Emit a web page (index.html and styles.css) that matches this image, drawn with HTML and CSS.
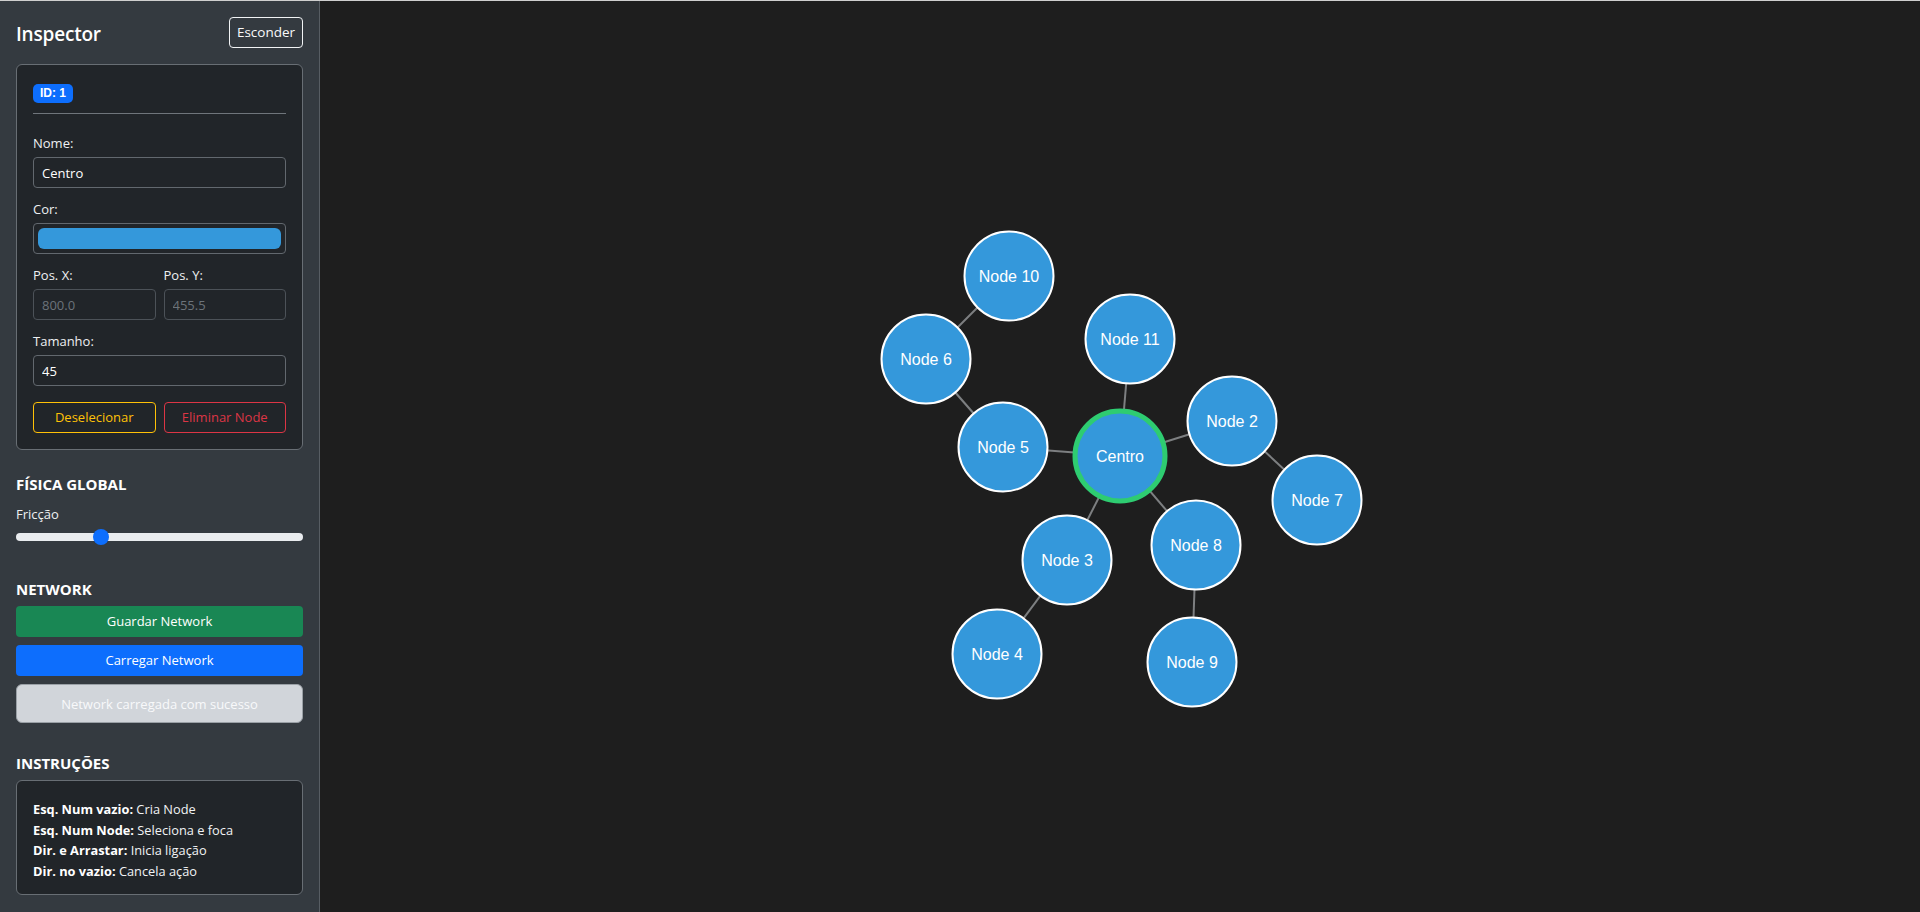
FILE: index.html
```html
<!DOCTYPE html>
<html lang="pt">
<head>
<meta charset="utf-8">
<title>Network Inspector</title>
<link rel="stylesheet" href="styles.css">
</head>
<body>
<div class="app">
  <aside class="sidebar">
    <div class="sb-header">
      <h5 class="title">Inspector</h5>
      <button class="btn btn-hide">Esconder</button>
    </div>

    <div class="card inspector">
      <div class="badge-row"><span class="badge">ID: 1</span></div>
      <hr class="divider">
      <div class="field">
        <label class="lbl">Nome:</label>
        <input class="input" type="text" value="Centro">
      </div>
      <div class="field">
        <label class="lbl">Cor:</label>
        <div class="color-input"><div class="swatch"></div></div>
      </div>
      <div class="field row2">
        <div class="col">
          <label class="lbl">Pos. X:</label>
          <input class="input input-ro" type="text" value="800.0" readonly>
        </div>
        <div class="col">
          <label class="lbl">Pos. Y:</label>
          <input class="input input-ro" type="text" value="455.5" readonly>
        </div>
      </div>
      <div class="field field-last">
        <label class="lbl">Tamanho:</label>
        <input class="input" type="text" value="45">
      </div>
      <div class="actions">
        <button class="btn btn-warn">Deselecionar</button>
        <button class="btn btn-danger">Eliminar Node</button>
      </div>
    </div>

    <h6 class="section-title sec-physics">FÍSICA GLOBAL</h6>
    <label class="lbl lbl-range">Fricção</label>
    <input class="range" type="range" min="0" max="1" step="0.001" value="0.284">

    <h6 class="section-title sec-network">NETWORK</h6>
    <div class="net-buttons">
      <button class="btn btn-block btn-green">Guardar Network</button>
      <button class="btn btn-block btn-blue">Carregar Network</button>
      <div class="status">Network carregada com sucesso</div>
    </div>

    <h6 class="section-title sec-instr">INSTRUÇÕES</h6>
    <div class="card instr">
      <div class="instr-line"><b>Esq. Num vazio:</b> Cria Node</div>
      <div class="instr-line"><b>Esq. Num Node:</b> Seleciona e foca</div>
      <div class="instr-line"><b>Dir. e Arrastar:</b> Inicia ligação</div>
      <div class="instr-line"><b>Dir. no vazio:</b> Cancela ação</div>
    </div>
  </aside>

  <main class="canvas">
    <svg class="graph" viewBox="320 1 1600 911" width="1600" height="911" xmlns="http://www.w3.org/2000/svg">
      <g class="edges">
        <line x1="1120" y1="456" x2="1130" y2="339"/>
        <line x1="1120" y1="456" x2="1003" y2="447"/>
        <line x1="1120" y1="456" x2="1232" y2="421"/>
        <line x1="1120" y1="456" x2="1067" y2="560"/>
        <line x1="1120" y1="456" x2="1196" y2="545"/>
        <line x1="1003" y1="447" x2="926" y2="359"/>
        <line x1="926" y1="359" x2="1009" y2="276"/>
        <line x1="1232" y1="421" x2="1317" y2="500"/>
        <line x1="1067" y1="560" x2="997" y2="654"/>
        <line x1="1196" y1="545" x2="1192" y2="662"/>
      </g>
      <g class="nodes">
        <g class="node"><circle cx="1009" cy="276" r="44.5"/><text x="1009" y="276">Node 10</text></g>
        <g class="node"><circle cx="926" cy="359" r="44.5"/><text x="926" y="359">Node 6</text></g>
        <g class="node"><circle cx="1130" cy="339" r="44.5"/><text x="1130" y="339">Node 11</text></g>
        <g class="node"><circle cx="1003" cy="447" r="44.5"/><text x="1003" y="447">Node 5</text></g>
        <g class="node"><circle cx="1232" cy="421" r="44.5"/><text x="1232" y="421">Node 2</text></g>
        <g class="node"><circle cx="1317" cy="500" r="44.5"/><text x="1317" y="500">Node 7</text></g>
        <g class="node"><circle cx="1067" cy="560" r="44.5"/><text x="1067" y="560">Node 3</text></g>
        <g class="node"><circle cx="1196" cy="545" r="44.5"/><text x="1196" y="545">Node 8</text></g>
        <g class="node"><circle cx="997" cy="654" r="44.5"/><text x="997" y="654">Node 4</text></g>
        <g class="node"><circle cx="1192" cy="662" r="44.5"/><text x="1192" y="662">Node 9</text></g>
        <g class="node node-selected"><circle cx="1120" cy="456" r="45"/><text x="1120" y="456">Centro</text></g>
      </g>
    </svg>
  </main>
</div>
</body>
</html>
```

FILE: styles.css
```css
* { box-sizing: border-box; }

html, body {
  margin: 0;
  padding: 0;
  height: 912px;
  overflow: hidden;
}

body {
  border-top: 1px solid #cfcfcf;
  background: #1e1e1e;
  font-family: "Open Sans", "Noto Sans", sans-serif;
  color: #f1f3f5;
}

.app {
  display: flex;
  height: 911px;
}

/* ---------- Sidebar ---------- */
.sidebar {
  width: 320px;
  flex: 0 0 320px;
  background: #343a40;
  border-right: 1px solid #575d63;
  padding: 16px 16px 0 16px;
  display: flex;
  flex-direction: column;
}

.sb-header {
  display: flex;
  justify-content: space-between;
  align-items: center;
  height: 31px;
  margin-bottom: 16px;
}

.title {
  margin: 0;
  font-size: 19px;
  font-weight: 600;
  line-height: 24px;
  color: #ffffff;
  padding-top: 3px;
  letter-spacing: -0.2px;
}

.btn {
  font-family: "Open Sans", "Noto Sans", sans-serif;
  font-size: 13px;
  line-height: 1;
  height: 31px;
  border-radius: 4px;
  background: transparent;
  cursor: pointer;
  padding: 0 8px;
}

.btn-hide {
  border: 1px solid #f1f3f5;
  color: #f8f9fa;
  width: 74px;
  padding: 0;
  font-size: 13.5px;
}

.card {
  background: #212529;
  border: 1px solid #686e74;
  border-radius: 6px;
}

.inspector {
  padding: 19px 16px 16px 16px;
}

.badge-row { display: flex; }

.badge {
  display: inline-block;
  height: 19px;
  line-height: 19px;
  padding: 0 7px;
  border-radius: 5px;
  background: #0d6efd;
  color: #ffffff;
  font-family: "Liberation Sans", Arial, sans-serif;
  font-weight: 700;
  font-size: 12px;
}

.divider {
  border: 0;
  border-top: 1px solid #6f757b;
  margin: 10px 0 19px 0;
  height: 0;
}

.field {
  display: flex;
  flex-direction: column;
  margin-bottom: 11px;
}

.field-last { margin-bottom: 16px; }

.lbl {
  font-size: 13px;
  line-height: 20px;
  color: #eef0f2;
  margin-bottom: 4px;
}

.input {
  height: 31px;
  width: 100%;
  background: #212529;
  border: 1px solid #62686e;
  border-radius: 4px;
  color: #ffffff;
  font-family: "Open Sans", "Noto Sans", sans-serif;
  font-size: 13px;
  padding: 0 8px;
  outline: none;
}

.input-ro {
  color: #6c737a;
  border-color: #4c5258;
}

.color-input {
  height: 31px;
  border: 1px solid #62686e;
  border-radius: 4px;
  padding: 4px;
}

.swatch {
  height: 100%;
  border-radius: 6px;
  background: #3498db;
}

.row2 {
  flex-direction: row;
  gap: 8px;
}

.col {
  flex: 1 1 0;
  display: flex;
  flex-direction: column;
  min-width: 0;
}

.actions {
  display: flex;
  gap: 8px;
}

.actions .btn { flex: 1 1 0; }

.btn-warn {
  border: 1px solid #ffc107;
  color: #ffc107;
}

.btn-danger {
  border: 1px solid #dc3545;
  color: #dc3545;
}

.section-title {
  margin: 0;
  font-size: 15px;
  font-weight: 700;
  line-height: 20px;
  color: #ffffff;
}

.sec-physics { margin-top: 24px; margin-bottom: 10px; }

.lbl-range { display: block; margin-bottom: 5px; }

.range {
  -webkit-appearance: none;
  appearance: none;
  width: 100%;
  height: 16px;
  margin: 0;
  background: transparent;
  padding: 0;
}

.range::-webkit-slider-runnable-track {
  height: 8px;
  background: #e9ecef;
  border-radius: 4px;
}

.range::-webkit-slider-thumb {
  -webkit-appearance: none;
  appearance: none;
  width: 16px;
  height: 16px;
  border-radius: 50%;
  background: #0d6efd;
  border: 0;
  margin-top: -4px;
}

.sec-network { margin-top: 34px; margin-bottom: 7px; }

.net-buttons {
  display: flex;
  flex-direction: column;
  gap: 8px;
}

.btn-block {
  width: 100%;
  border: 0;
  color: #ffffff;
}

.btn-green { background: #198754; }
.btn-blue { background: #0d6efd; }

.status {
  height: 39px;
  border: 1px solid #9aa0a6;
  border-radius: 6px;
  background: #d1d5da;
  color: #f8f9fa;
  font-size: 13px;
  display: flex;
  align-items: center;
  justify-content: center;
}

.sec-instr { margin-top: 30px; margin-bottom: 7px; }

.instr {
  padding: 18px 16px 13px 16px;
}

.instr-line {
  font-size: 12.8px;
  line-height: 20.6px;
  color: #f1f3f5;
}

.instr-line b { font-weight: 700; color: #ffffff; }

/* ---------- Canvas ---------- */
.canvas {
  flex: 1 1 auto;
  background: #1e1e1e;
  overflow: hidden;
}

.graph { display: block; }

.edges line {
  stroke: #7d7f81;
  stroke-width: 2;
}

.node circle {
  fill: #3498db;
  stroke: #ffffff;
  stroke-width: 2;
}

.node-selected circle {
  stroke: #2ecc71;
  stroke-width: 5;
}

.node text {
  fill: #ffffff;
  font-family: "Liberation Sans", Arial, sans-serif;
  font-size: 16px;
  text-anchor: middle;
  dominant-baseline: central;
}
```
